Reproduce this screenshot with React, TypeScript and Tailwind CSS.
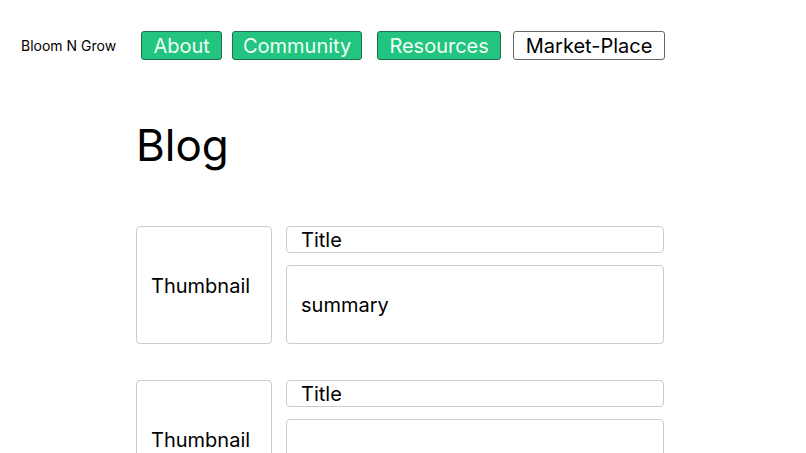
import React from "react";

const navLinks = [
  { label: "About", active: true, cls: "ml-[25px] w-[81px]" },
  { label: "Community", active: true, cls: "ml-[10px] w-[130px]" },
  { label: "Resources", active: true, cls: "ml-[15px] w-[124px]" },
  { label: "Market-Place", active: false, cls: "ml-[12px] w-[152px]" },
];

const posts = [
  { title: "Title", summary: "summary" },
  { title: "Title", summary: "" },
];

export default function App() {
  return (
    <div className="min-h-screen bg-white text-black font-['Inter',sans-serif]">
      {/* top nav */}
      <header className="flex items-center pl-[21px] pt-[31px]">
        <span className="text-[14px] leading-none">Bloom N Grow</span>
        {navLinks.map((link) => (
          <a
            key={link.label}
            href="#"
            className={`${link.cls} flex h-[29px] items-center justify-center rounded-[3px] border text-[20px] leading-none ${
              link.active
                ? "border-[#1f6e4c] bg-[#22c47f] text-[#effff6]"
                : "border-[#666] bg-white text-black"
            }`}
          >
            {link.label}
          </a>
        ))}
      </header>

      <main className="ml-[136px] w-[528px]">
        <h1 className="mt-[63px] text-[44px] font-normal leading-none">Blog</h1>

        <div className="mt-[59px] flex flex-col gap-[36px]">
          {posts.map((post, i) => (
            <article key={i} className="flex gap-[14px]">
              <div className="flex h-[118px] w-[136px] shrink-0 items-center rounded-[4px] border border-[#ccc] px-[14px] pt-[2px] text-[20px]">
                Thumbnail
              </div>
              <div className="flex flex-1 flex-col gap-[12px]">
                <div className="flex h-[27px] items-center rounded-[4px] border border-[#ccc] px-[14px] text-[20px]">
                  {post.title}
                </div>
                <div className="flex h-[79px] items-center rounded-[4px] border border-[#ccc] px-[14px] text-[20px]">
                  {post.summary}
                </div>
              </div>
            </article>
          ))}
        </div>
      </main>
    </div>
  );
}
